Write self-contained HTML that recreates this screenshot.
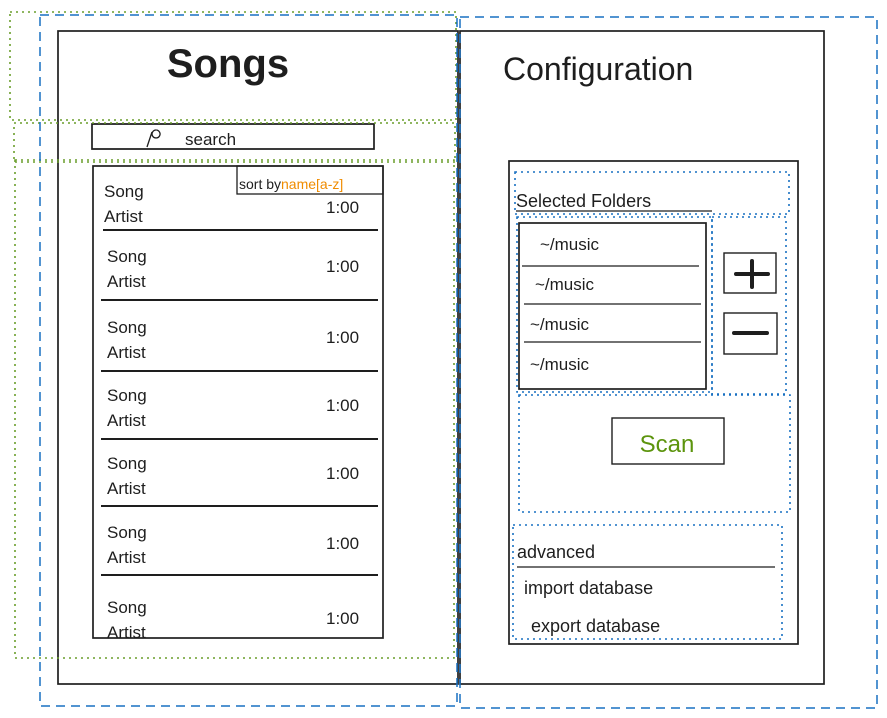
<!DOCTYPE html>
<html><head><meta charset="utf-8"><style>
html,body{margin:0;padding:0;background:#fff;width:887px;height:718px;overflow:hidden}
svg{display:block}
text{font-family:"Liberation Sans",sans-serif;fill:#1e1e1e}
</style></head><body>
<svg width="887" height="718" viewBox="0 0 887 718" xmlns="http://www.w3.org/2000/svg">
<g fill="none" stroke="#1e1e1e" stroke-width="1.7">
<rect x="58" y="31" width="400" height="653"/>
<rect x="460" y="31" width="364" height="653"/>
<path d="M92 124 L374 124 L374 149 L92 149 Z"/>
<rect x="93" y="166" width="290" height="472"/>
<rect x="237" y="166" width="146" height="28" stroke-width="1.3"/>
<path d="M103 230 H378 M101 300 H378 M101 371 H378 M101 439 H378 M101 506 H378 M101 575 H378" stroke-width="2"/>
<path d="M147 147 L152 132 M156 130 a4 4 0 1 0 0.1 0" stroke-width="1.3"/>
<rect x="509" y="161" width="289" height="483"/>
<rect x="519" y="223" width="187" height="166"/>
<path d="M522 266 H699 M524 304 H701 M524 342 H701" stroke-width="1.3"/>
<path d="M516 211 H712 M517 567 H775" stroke-width="1.3"/>
<rect x="724" y="253" width="52" height="40" stroke-width="1.4"/>
<rect x="724" y="313" width="53" height="41" stroke-width="1.4"/>
<path d="M736 274 H768 M752 261 V287 M734 333 H767" stroke-width="4" stroke-linecap="round"/>
<rect x="612" y="418" width="112" height="46" stroke-width="1.4"/>
</g>
<g fill="none" stroke="#6a9e2c" stroke-width="1.6" stroke-dasharray="2 4">
<rect x="10" y="12" width="446" height="108"/>
<rect x="14" y="123" width="441" height="39"/>
<rect x="15" y="160" width="439" height="498"/>
</g>
<g fill="none" stroke="#1971c2" stroke-width="1.5" stroke-dasharray="9 6">
<rect x="40" y="15" width="417" height="691"/>
<rect x="460" y="17" width="417" height="691"/>
</g>
<g fill="none" stroke="#1971c2" stroke-width="1.6" stroke-dasharray="2 4">
<rect x="515" y="172" width="274" height="42"/>
<rect x="517" y="217" width="195" height="175"/>
<rect x="712" y="217" width="74" height="177"/>
<rect x="519" y="395" width="271" height="117"/>
<rect x="513" y="525" width="269" height="114"/>
</g>
<text x="228" y="77" font-size="40" text-anchor="middle" font-weight="bold">Songs</text>
<text x="503" y="80" font-size="32">Configuration</text>
<text x="185" y="145" font-size="17">search</text>
<text x="239" y="189" font-size="14">sort by<tspan fill="#f08c00">name[a-z]</tspan></text>
<g font-size="17">
<text x="104" y="197">Song</text><text x="104" y="222">Artist</text><text x="326" y="213">1:00</text>
<text x="107" y="262">Song</text><text x="107" y="287">Artist</text><text x="326" y="272">1:00</text>
<text x="107" y="333">Song</text><text x="107" y="358">Artist</text><text x="326" y="343">1:00</text>
<text x="107" y="401">Song</text><text x="107" y="426">Artist</text><text x="326" y="411">1:00</text>
<text x="107" y="469">Song</text><text x="107" y="494">Artist</text><text x="326" y="479">1:00</text>
<text x="107" y="538">Song</text><text x="107" y="563">Artist</text><text x="326" y="549">1:00</text>
<text x="107" y="613">Song</text><text x="107" y="638">Artist</text><text x="326" y="624">1:00</text>
</g>
<text x="516" y="207" font-size="18">Selected Folders</text>
<g font-size="17">
<text x="540" y="250">~/music</text>
<text x="535" y="290">~/music</text>
<text x="530" y="330">~/music</text>
<text x="530" y="370">~/music</text>
</g>
<text x="667" y="452" font-size="24" text-anchor="middle" style="fill:#5c940d">Scan</text>
<text x="517" y="558" font-size="18">advanced</text>
<text x="524" y="594" font-size="18">import database</text>
<text x="531" y="632" font-size="18">export database</text>
</svg>
</body></html>
